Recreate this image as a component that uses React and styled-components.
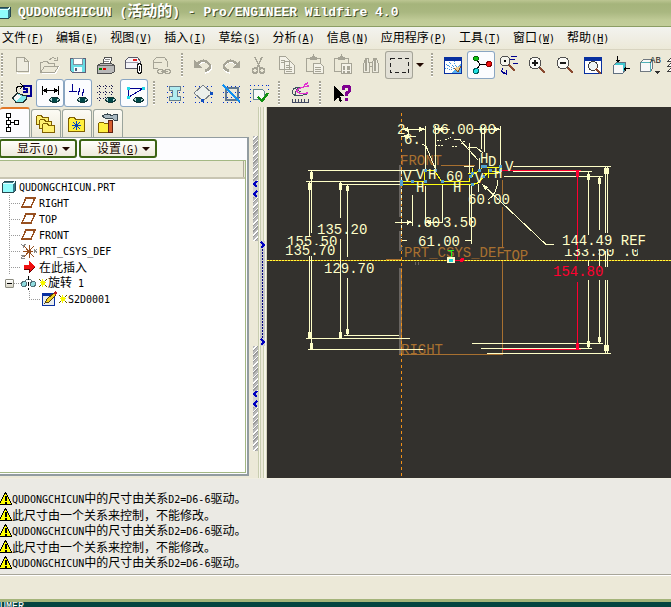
import React from 'react';
import styled, { createGlobalStyle } from 'styled-components';

const MENUS = [
    ['文件', 'F'], ['编辑', 'E'], ['视图', 'V'], ['插入', 'I'], ['草绘', 'S'], ['分析', 'A'],
    ['信息', 'N'], ['应用程序', 'P'], ['工具', 'T'], ['窗口', 'W'], ['帮助', 'H'],
];

const DRIVEN = 'QUDONGCHICUN中的尺寸由关系D2=D6-6驱动。';
const LOCKED = '此尺寸由一个关系来控制，不能修改。';
const MESSAGES = [DRIVEN, LOCKED, DRIVEN, LOCKED, DRIVEN];

const GREY = '#a6a496';
const NAVY = '#000090';

// shared bits of the icons
const EYE = <g><path d="M13 21q5-6 11 0q-5 5-11 0" fill="#b8d8d8" stroke="#103838" /><circle cx="18.5" cy="21" r="2.5" fill="#004848" /></g>;
const DOTS = <path d="M6 7.5h17M6 13.5h17M6 18.5h17M6 23.5h17" stroke="#0030d0" strokeDasharray="1 3" />;
const HANDLE = <path d="M17 17l5 5" stroke="#8a4a30" strokeWidth="2.5" />;

const ICONS = {
    new: <g stroke={GREY}><path d="M9.5 7.5h8l4 4v11h-12z" stroke="#fff" /><path d="M8.5 6.5h8l4 4v10h-12zM16.5 6.5v4h4" fill="#eeece0" /></g>,
    open: <g stroke={GREY}><path d="M5.5 22.5h14l4-7" stroke="#fff" /><path d="M4.5 21.5v-10h2l1-1h4l1 2h6v3M4.5 21.5l4-6h14l-4 6zM13.5 9q3-4 6-1M21.5 5.5v4h-4" /></g>,
    save: <g><path d="M6.5 7.5h15v14h-13l-2-2z" fill="#68dce4" stroke="#606078" /><path d="M9.5 7.5h9v6h-9z" fill="#fff" stroke="#8090a0" /><path d="M10 16h8v5h-8z" fill="#f4fcff" /><path d="M11 17h2v3h-2z" fill="#506078" /></g>,
    print: <g><path d="M10.5 14l2-8h7l-1 8" fill="#fff" stroke="#505050" /><path d="M13 8.5h5M12 10.5h5M12 12.5h5" stroke="#888" /><path d="M5.5 14.5l3-2h11l3 2v6l-3 2h-14z" fill="#b8b8b8" stroke="#505050" /><path d="M6 14.5h16" stroke="#606060" /><path d="M7 17h3v2h-3z" fill="#008000" /><path d="M11 17h3v2h-3z" fill="#e00000" /></g>,
    mail: <g><path d="M5.5 17.5v-8l3-3h9l3 4v7z" fill="#f4f4f8" stroke="#585868" /><path d="M5.5 11.5h12v6" stroke="#9898a8" /><path d="M13 8h4v2h-4z" fill="#e02020" /><path d="M17.5 21v-7q2-3 4 0v7q-2 3-4 0zM19.5 15v5" fill="#fff" stroke="#101010" /></g>,
    link: <g stroke={GREY}><path d="M5.5 17.5v-8l3-3h8l3 4v5M5.5 11.5h8M10 17.5h-5" /><path d="M10.5 18.5h4l1 2-1 2h-4l-1-2zM17.5 18.5h4l1 2-1 2h-4l-1-2zM13 20.5h7" /></g>,
    undo: <g><path d="M9 14q7-7 13 1q1 5-6 7" stroke="#fff" strokeWidth="2" /><path d="M8 13q7-7 13 1q1 4-5 6" stroke={GREY} strokeWidth="2.5" /><path d="M5 9v8h8z" fill={GREY} /></g>,
    redo: <g><path d="M20 14q-7-7-13 1q-1 5 6 7" stroke="#fff" strokeWidth="2" /><path d="M20 13q-7-7-13 1q-1 4 5 6" stroke={GREY} strokeWidth="2.5" /><path d="M23 9v8h-8z" fill={GREY} /></g>,
    cut: <g stroke={GREY} strokeWidth="1.5"><path d="M10 6l5 11M17 6l-5 11" /><circle cx="10" cy="19.5" r="2.5" /><circle cx="17" cy="19.5" r="2.5" /></g>,
    copy: <g stroke={GREY}><path d="M6.5 5.5h6l4 4v9h-10zM11.5 10.5h6l4 4v8h-10z" fill="#f4f2e8" /><path d="M8 9.5h4M8 11.5h3M13 14.5h4M13 16.5h6M13 18.5h6M13 20.5h6" /></g>,
    paste: <g stroke={GREY}><path d="M5.5 7.5h14v13h-14z" /><path d="M9.5 8.5v-2h2l1-2 1 2h2v2z" fill={GREY} /><path d="M12.5 12.5h7l3 3v7h-10z" fill="#f4f2e8" /><path d="M14 16.5h6M14 18.5h6M14 20.5h6" /></g>,
    pasteSpecial: <g stroke={GREY}><path d="M5.5 7.5h14v13h-14z" /><path d="M9.5 8.5v-2h2l1-2 1 2h2v2z" fill={GREY} /><path d="M12.5 12.5h10v10h-10z" fill="#f4f2e8" /><path d="M14 15.5h2M18 15.5h3M14 17.5h2M18 17.5h3M14 20.5h2M18 20.5h3" strokeWidth="2" /></g>,
    find: <g stroke={GREY}><path d="M8.5 7.5h3v3l1 2v9h-6v-8zM16.5 7.5h3l2 6v8h-6v-9zM12.5 11.5h3M12.5 15.5h3" fill="#eeece0" /><path d="M9 8v12M18 8v12" strokeWidth="2" /></g>,
    select: <path d="M5.5 7.5h18v14h-18z" stroke="#202020" strokeDasharray="4 3" />,
    repaint: <g><path d="M5.5 6.5h17v16h-17z" fill="#fff" stroke="#0830a0" /><path d="M5 6h18v4h-18z" fill="#0830a0" /><path d="M12 22l10-9v9z" fill="#58b0f0" /><path d="M7 13l8 5M10 11l7 7M15 10l3 8M6 17l8 2" stroke="#4098e0" strokeDasharray="1 1" /><path d="M15 17l4 4 3-6" stroke="#805028" fill="#f0d090" /></g>,
    spin: <g><path d="M9 8l4 5M13 13l-4 7M13 13.5h9" stroke="#000" /><circle cx="9" cy="7.5" r="2.5" fill="#10c010" stroke="#086008" /><circle cx="22" cy="13" r="2.5" fill="#f01010" stroke="#800" /><circle cx="9" cy="20" r="2.5" fill="#20e0e0" stroke="#006060" /></g>,
    orient: <g><circle cx="10" cy="10" r="5" fill="#f4f4ec" stroke="#505050" /><path d="M9 9h2v2h-2z" fill="#000" /><path d="M14 14l6 6" stroke="#8a4a30" strokeWidth="2" /><path d="M16 5.5h6M15 8.5h5M18 12.5h5M8 17q-3 4 2 6M8 21l3 2v-4" stroke={NAVY} /></g>,
    zoomIn: <g><circle cx="12" cy="12" r="6" fill="#fafaf6" stroke="#505050" /><path d="M9 12h6M12 9v6" stroke="#181818" strokeWidth="2" />{HANDLE}</g>,
    zoomOut: <g><circle cx="12" cy="12" r="6" fill="#fafaf6" stroke="#505050" /><path d="M9 12h6" stroke="#181818" strokeWidth="2" />{HANDLE}</g>,
    refit: <g><path d="M5.5 6.5h17v16h-17z" fill="#fff" stroke="#0830a0" /><path d="M5 6h18v4h-18z" fill="#0830a0" /><circle cx="14" cy="15" r="4.5" fill="#eef4f4" stroke="#404040" /><path d="M17 18l5 5" stroke="#8a4a30" strokeWidth="2" /></g>,
    views: <g><path d="M6.5 14.5l3-3h9v7l-3 4h-9z" fill="#40c8d0" stroke="#607080" /><path d="M7 14h9v8h-9z" fill="#f8f8f8" /><path d="M10.5 5v6M23 17.5h-6" stroke="#000" /><path d="M8 9h5l-2 3zM19 15v5l-3-2z" fill="#000" /></g>,
    annotate: <g><path d="M5.5 11.5l3-3h9v9l-2 3h-10z" fill="#f8f8f8" stroke="#707880" /><path d="M5.5 11.5h10v9M15.5 11.5l2-3" stroke="#50b0b8" /><path d="M19 20h6l-3 3z" fill="#303030" /></g>,
    layers: <g stroke="#404040" fill="#fff"><path d="M5 20l4-4h12l-4 4zM5 15l4-4h12l-4 4zM5 10l4-4h12l-4 4z" /></g>,
    sketchView: <g><path d="M16 6.5h7v10h-8M16 6v4h3v3h-4" stroke={NAVY} strokeWidth="2" /><path d="M8.5 13v-4l2-2h5M12 4l3 3-3 3" stroke="#000" /><path d="M4.5 19l5-5 5 2 4 1v3l-3 3h-8z" fill="#80e8e8" stroke="#203030" /><path d="M5 19l4-4 4 2-4 5z" fill="#f8f8f8" /></g>,
    dims: <g><path d="M6.5 7v9M22.5 7v9M7 11.5h15" stroke="#000" /><path d="M7 11.5l4-3v6zM22 11.5l-4-3v6z" fill="#000" />{EYE}</g>,
    constraints: <g><path d="M8.5 5v8M5 12.5h8M14 16l2-7M18 17l2-7" stroke={NAVY} />{EYE}</g>,
    grid: <g><path d="M7.5 6v17M13.5 6v17M19.5 6v17M5 7.5h18M5 13.5h18M5 19.5h18" stroke="#181850" strokeDasharray="1 2" />{EYE}</g>,
    vertices: <g><path d="M8 9.500h15l-15 9z" stroke={NAVY} /><path d="M7 8h3v3h-3zM22 8h3v3h-3zM7 17h3v3h-3z" fill="#20d8e8" />{EYE}</g>,
    dimStyle: <g>{DOTS}<path d="M8.5 7.5h11v4h-3v6h3v4h-11v-4h3v-6h-3z" fill="#b0ecf0" stroke="#68808c" /></g>,
    rotated: <g>{DOTS}<path d="M14 6l9 8-9 8-9-8z" fill="#ecf0ec" stroke="#788088" /><path d="M21 13h3v3h-3zM12 20h3v3h-3z" fill="#1050c0" /></g>,
    hatch: <g>{DOTS}<path d="M8.5 8.5h12v12h-12z" stroke="#607890" strokeWidth="2" /><path d="M6 6l17 17" stroke="#1090f0" strokeWidth="2" /></g>,
    accept: <g><path d="M5 6.5h18M5.5 6v17M23.5 6v8" stroke="#0030d0" strokeDasharray="1 3" /><path d="M8.5 10.5h9l2 2v8h-11z" fill="#f8f8f8" stroke="#608890" /><path d="M13 18l4 4 6-8" stroke="#109010" strokeWidth="2.5" /></g>,
    measure: <g><path d="M6 23.5h17M6.5 20v3M9.5 20v3M12.5 20v3M15.5 20v3M18.5 20v3M22.5 20v3" stroke="#404860" /><path d="M18 9q-11-2-12 4q1 6 15 2M14 8q-5 3-5 8M10 10l5 3" stroke="#405060" /><path d="M23 7q-10 1-12 5q2 4 11 2M18 6l4-2" stroke="#e030d0" strokeWidth="1.5" /></g>,
    help: <g><path d="M7 7v15l4-4 2 5 2-1-2-5h4z" fill="#000" /><path d="M16 11q0-4 3-4q4 0 4 3t-4 4v3M19.5 19v3" stroke="#800090" strokeWidth="3" /></g>,
};

const ROW_ONE = [
    'new', 'open', 'save', 'print', 'mail', 'link', '|', 'undo', 'redo', 'cut', 'copy', 'paste', 'pasteSpecial',
    'find', 'select', 'v', '|', 'repaint', 'spin', 'orient', 'zoomIn', 'zoomOut', 'refit', 'views', 'annotate', 'layers',
];
const ROW_TWO = [
    'sketchView', 'dims', 'constraints', 'grid', 'vertices', '|', 'dimStyle', 'rotated', 'hatch', 'accept', '|', 'measure', '|', 'help',
];
const CHECKED = ['spin', 'dims', 'constraints', 'vertices'];

// Latin letters are half as wide as the Chinese ones
function Mixed({ children }) {
    return (
        <span>
            {children.split(/([\x20-\x7e]+)/).filter(Boolean).map((part, i) => (
                /^[\x20-\x7e]/.test(part) ? <Latin key={i}>{part}</Latin> : part
            ))}
        </span>
    );
}

function Toolbar({ items, label }) {
    return (
        <ToolRow role="toolbar" aria-label={label}>
            <Grip $first />
            {items.map((name, i) => {
                if (name === '|') return <Grip key={i} />;
                if (name === 'v') return <DropButton key={i} aria-label="select options"><Triangle /></DropButton>;
                return (
                    <ToolButton key={i} aria-label={name} $checked={CHECKED.includes(name)} $pressed={name === 'select'}>
                        <Glyph viewBox="0 0 28 28">
                            {ICONS[name]}
                            {name === 'annotate' && <GlyphText x="15" y="12">AB</GlyphText>}
                        </Glyph>
                    </ToolButton>
                );
            })}
        </ToolRow>
    );
}

const Plane = () => <TreeIcon viewBox="0 0 16 16"><path d="M5 3h9l-4 9h-9z" stroke="#985020" strokeWidth="1.5" /></TreeIcon>;
const Cube = () => <TreeIcon viewBox="0 0 16 16"><path d="M1.5 4.5l2-2h11v9l-2 2h-11z" fill="#387888" stroke="#284850" /><path d="M2 5h10v8h-10z" fill="#90fcfc" /><path d="M2 4.5h10l2-2" stroke="#e0ffff" /></TreeIcon>;
const Csys = () => <TreeIcon viewBox="0 0 16 16"><path d="M8 2v13M2 8h10M3 3l10 11M13 3l-10 11" stroke="#985020" /><path d="M0 1l2 2 3-2M2 3v2M13 6l3 4M16 6l-3 4M0 12h4l-4 3h4" stroke="#888" /></TreeIcon>;
const InsertArrow = () => <TreeIcon viewBox="0 0 16 16"><path d="M3 6h5v-4l6 6-6 6v-4h-5z" fill="#f01010" /><path d="M3 10h5v4l6-6" stroke="#600" /></TreeIcon>;
const Revolve = () => <TreeIcon viewBox="0 0 16 16"><path d="M7.5 1v14" stroke="#000" strokeDasharray="4 2" /><path d="M3 8q2-5 4-3M12 8q-2-5-4-3" stroke="#607880" /><circle cx="3" cy="9" r="2.5" fill="#90dce0" stroke="#507078" /><circle cx="12" cy="9" r="2.5" fill="#90dce0" stroke="#507078" /></TreeIcon>;
const Sketch = () => <TreeIcon viewBox="0 0 16 16"><path d="M1.5 2.5h12v12h-12z" fill="#e8ecec" stroke="#0830a0" /><path d="M1 2h12v3h-12z" fill="#0830a0" /><path d="M4 12l2-4 7-6 2 2-7 7z" fill="#f0d020" stroke="#504010" /><path d="M12 2l2-2 2 2-2 2z" fill="#c02020" /></TreeIcon>;
const Star = () => <StarIcon viewBox="0 0 8 10"><path d="M0 1l8 8M8 1l-8 8" stroke="#605800" /><path d="M2 3h4v4h-4z" fill="#f8f800" /><path d="M3.5 1v8M1 4.5h6" stroke="#f8f800" /></StarIcon>;

function ModelTree() {
    return (
        <Tree>
            <TreeRow $indent={1}><Cube /><Mixed>QUDONGCHICUN.PRT</Mixed></TreeRow>
            {['RIGHT', 'TOP', 'FRONT'].map(name => (
                <TreeRow key={name} $indent={9}><Branch /><Plane /><Mixed>{name}</Mixed></TreeRow>
            ))}
            <TreeRow $indent={9}><Branch /><Csys /><Mixed>PRT_CSYS_DEF</Mixed></TreeRow>
            <TreeRow $indent={9}><Branch /><InsertArrow /><Mixed>在此插入</Mixed></TreeRow>
            <TreeRow $indent={5}>
                <Collapse aria-label="collapse"><Minus /></Collapse>
                <Branch $short /><Revolve /><Star /><Mixed>旋转 1</Mixed>
            </TreeRow>
            <TreeRow $indent={29}><Branch $last /><Sketch /><Star /><Mixed>S2D0001</Mixed></TreeRow>
        </Tree>
    );
}

// [text, x, baseline]
const DIM_TEXTS = [
    ['135.20', 317, 234], ['135.70', 285, 255], ['129.70', 324, 273], ['61.00', 418, 246],
    ['.60', 415, 227], ['3.50', 443, 227], ['60.00', 468, 204], ['60', 446, 181],
    ['86.00', 432, 134], ['00', 479, 134], ['2', 397, 134], ['6.', 404, 144], ['144.49 REF', 562, 245],
    ['V', 403, 181], ['V', 416, 179], ['H', 428, 179], ['H', 416, 192], ['H', 453, 192], ['H', 480, 163],
    ['V', 505, 171], ['D', 488, 166], ['V', 475, 183], ['H', 494, 178],
];
const DATUM_TEXTS = [['FRONT', 400, 165], ['RIGHT', 401, 354], ['PRT_CSYS_DEF', 404, 257], ['TOP', 503, 260]];
const VERTICES = [
    [401, 181], [412, 181], [425, 181], [425, 170], [435, 170], [442, 181], [470, 176], [472, 173], [479, 170],
    [482, 166], [485, 166], [500, 166], [500, 170], [490, 170], [483, 176], [472, 184], [401, 184],
];

function Drawing() {
    return (
        <Canvas viewBox="267 107 404 371" role="img" aria-label="sketch">
            <g stroke="#686460" strokeWidth="2"><path d="M400 165v52M400 231v20M400 268v86" /></g>
            <g stroke="#a87030">
                <path d="M441 165.5h34M502.5 180v15M502.5 207v40M502.5 260v94M399 354h104M386 259.5h16M401.5 268v86" />
            </g>
            <path d="M401.5 113v364" stroke="#f09018" strokeDasharray="3 3" />
            <path d="M401.5 168v70" stroke="#ffffc8" strokeDasharray="3 3" strokeDashoffset="3" />
            {DATUM_TEXTS.map(([text, x, y]) => <DatumText key={text} x={x} y={y}>{text}</DatumText>)}
            <path d="M267 260.5h404" stroke="#c87800" />
            <path d="M267 260.5h404" stroke="#ffff40" strokeDasharray="2 1" />
            <g stroke="#ffffc8">
                <path d="M308 170.5h109M306 181.5h94M341 184.5h59" />
                <path d="M311.5 171v62M309.5 182v55M309.5 256v82M311.5 256v93M340.5 182v36M340.5 239v99M347.5 185v72M347.5 278v57" />
                <path d="M344 335.5h55M306 338.5h104M308 349.5h115" />
                <path d="M513 166.5h98M513 171.5h79M504 176.5h99" />
                <path d="M588.5 172v63M588.5 260v6M588.5 280v68M599.5 177v53M599.5 250v17M599.5 280v63" />
                <path d="M605.5 166v67M607.5 166v67M605.5 251v16M607.5 251v16M605.5 280v73M607.5 280v73" />
                <path d="M472 343.5h131M481 348.5h111M487 353.5h124" />
                <path d="M425.5 126v44M425.5 186v40M435.5 126v44M500.5 126v40M412.5 195v31M442.5 185v37M469.5 143v30M469.5 185v40M471.5 185v59M479.5 158v12M481.5 127v22M484.5 127v25M478.5 184v8" />
                <path d="M401 129.5h24M436 129.5h14M474 129.5h26M401 136.5h15M395 222.5h17M425 222.5h18M402 240.5h5M465 240.5h6M408.5 129v8" />
                <path d="M422 144l4 2 9 22M460 140l18 20M454 139.5h7M468 147l9 1 6 5M482 184l64 60.5h8M498 180q-1 14-10 20M464 166.5h10" />
                <path d="M435 145h8M445 140l6-3M452 146h5M461 144l5-4M437 140h4" strokeDasharray="2 1" />
            </g>
            <g fill="#ffffc8">
                <path d="M310 172h3v7h-3zM308 183h3v7h-3zM339 183h3v7h-3zM346 186h3v5h-3zM308 332h3v6h-3zM310 343h3v6h-3zM339 332h3v6h-3zM346 329h3v5h-3z" />
                <path d="M587 174h3v6h-3zM598 178h3v6h-3zM604 168h5v6h-5zM587 341h3v6h-3zM598 337h3v5h-3zM604 345h5v6h-5z" />
                <path d="M402 129l6-2v5zM425 129l-6-2v5zM436 129l6-2v5zM500 129l-6-2v5zM403 136l5-2v5zM412 222l-5-2v5zM426 222l5-2v5zM482 184l6 3-3 3z" />
            </g>
            <g stroke="#ff0030">
                <path d="M502 170.5h79M577.5 171v89M577.5 282v67M503 349.5h78" />
                <path d="M577.5 171v6M577.5 343v6" strokeWidth="3" />
            </g>
            <g stroke="#ffff10">
                <path d="M401 184.5h71l5-1 6-6 7-6.5h11v-4h-18l-4 4-7 3-3 4v3.500h-27.500l-7-11h-10v11H401M484 173h14M488.5 169v9M472.5 168v9M468 173h9" />
            </g>
            {VERTICES.map(([x, y], i) => <rect key={i} x={x - 1} y={y - 1} width="3" height="3" fill="#50a0d0" />)}
            {DIM_TEXTS.map(([text, x, y]) => <DimText key={`${text}${x}${y}`} x={x} y={y}>{text}</DimText>)}
            <clipPath id="upper"><path d="M284 236h56v9h-56z" /></clipPath>
            <clipPath id="lower"><path d="M562 249h76v8h-76z" /></clipPath>
            <DimText x="287" y="246" clipPath="url(#upper)">155.50</DimText>
            <DimText x="564" y="256" clipPath="url(#lower)">133.50 .0</DimText>
            <DimText x="553" y="276" $active>154.80</DimText>
            <path d="M447 257h8v6h-8z" fill="#ffffd0" />
            <path d="M449 259h4v3h-4z" fill="#20d0d8" />
            <path d="M448 250.5h6M451.5 250v7" stroke="#20f020" />
            <path d="M455 260.5h6" stroke="#ff0030" />
            <circle cx="462" cy="260" r="2" fill="#ff0030" />
            <path d="M399 246l4 5M403 246l-4 5M415 262v3M418 262v3" stroke="#686460" />
        </Canvas>
    );
}

const FOLDER = 'M1.5 3.5l1-1h4l1 2h6v7h-12z';
const TAB_ICONS = [
    <g stroke="#000" fill="#fff"><path d="M4.5 4v12M5 10.5h8" /><path d="M2.5 1.5h4v4h-4zM2.5 8.5h4v4h-4zM2.5 15.5h4v4h-4zM10.5 8.5h4v4h-4z" /></g>,
    <g fill="#fff070" stroke="#806000"><path d={FOLDER} /><path d={FOLDER} transform="translate(3 4)" /><path d={FOLDER} transform="translate(6 8)" /></g>,
    <g><path d="M2.5 6.5l1-2h5l1 2h9v12h-16z" fill="#fff040" stroke="#806000" /><path d="M10.5 8v9M6 12.5h9M7 9l7 7M14 9l-7 7" stroke="#0040c0" /></g>,
    <g><path d="M1.5 10.5l1-1h4l1 1h6v9h-12z" fill="#fff040" stroke="#806000" /><path d="M5 3q6-4 10 0l2-2h3v6h-3l-2-2h-7z" fill="#a8b8c0" stroke="#384850" /><path d="M11 7h4v12h-4z" fill="#d86030" stroke="#602010" /></g>,
];

function App() {
    return (
        <Window>
            <GlobalStyle />
            <TitleBar>
                <Cube />
                <Title>QUDONGCHICUN (<TitleHan>活动的</TitleHan>) - Pro/ENGINEER Wildfire 4.0</Title>
            </TitleBar>
            <MenuBar>
                {MENUS.map(([name, key]) => (
                    <MenuItem key={key}>{name}<Latin>(<u>{key}</u>)</Latin></MenuItem>
                ))}
            </MenuBar>
            <Toolbars>
                <Toolbar items={ROW_ONE} label="file and view" />
                <Toolbar items={ROW_TWO} label="sketcher" />
            </Toolbars>
            <Workspace>
                <Navigator>
                    <Tabs>
                        {TAB_ICONS.map((icon, i) => (
                            <Tab key={i} $active={i === 0} aria-label={`tab ${i + 1}`}>
                                <TabIcon viewBox="0 0 22 22">{icon}</TabIcon>
                            </Tab>
                        ))}
                    </Tabs>
                    <Pane>
                        <PaneButtons>
                            <PaneButton><span>显示<Latin>(<u>O</u>)</Latin></span><Triangle /></PaneButton>
                            <PaneButton><span>设置<Latin>(<u>G</u>)</Latin></span><Triangle /></PaneButton>
                        </PaneButtons>
                        <TreeBox>
                            <TreeHeader />
                            <ModelTree />
                        </TreeBox>
                    </Pane>
                </Navigator>
                <Splitter>
                    <SashGrip><Chevrons viewBox="0 0 5 16"><path d="M4 0L1 3l3 3M4 10L1 13l3 3" /></Chevrons></SashGrip>
                    <SashTrack>
                        <Chevrons viewBox="0 0 5 8"><path d="M1 1l3 3-3 3" /></Chevrons>
                        <BlueDots />
                        <Chevrons viewBox="0 0 5 8"><path d="M1 1l3 3-3 3" /></Chevrons>
                    </SashTrack>
                    <SashGrip><Chevrons viewBox="0 0 5 16"><path d="M4 0L1 3l3 3M4 10L1 13l3 3" /></Chevrons></SashGrip>
                </Splitter>
                <Viewport><Drawing /></Viewport>
            </Workspace>
            <Messages>
                {MESSAGES.map((text, i) => (
                    <Message key={i}>
                        <WarnIcon viewBox="0 0 12 14">
                            <path d="M5.5 .5l6.500 12h-13z" fill="#ff0" stroke="#000" />
                            <path d="M5.5 4v5M5.5 10v2" stroke="#000" strokeWidth="2" />
                        </WarnIcon>
                        <Mixed>{text}</Mixed>
                    </Message>
                ))}
            </Messages>
            <StatusBar />
            <Desktop>UMER</Desktop>
        </Window>
    );
}

export default App;

const GlobalStyle = createGlobalStyle`
    * {
        box-sizing: border-box;
    }
    body {
        margin: 0;
        background: #ece9d8;
        font-family: 'Noto Sans CJK SC', sans-serif;
        font-size: 12px;
        line-height: 16px;
        color: #000;
    }
    button {
        font: inherit;
        color: inherit;
        padding: 0;
        border: 0;
        background: none;
    }
    svg {
        display: block;
        flex: none;
        fill: none;
        shape-rendering: crispEdges;
    }
`;

const Window = styled.div`
    display: flex;
    flex-direction: column;
    min-height: 100vh;
    overflow: hidden;
`;

const Latin = styled.span`
    font-family: 'DejaVu Sans Mono', monospace;
    font-size: 10px;
    white-space: pre;
`;

const TitleBar = styled.header`
    display: flex;
    align-items: center;
    height: 27px;
    border-bottom: 1px solid #8b9d64;
    background: linear-gradient(#bcc692 0, #a5b47b 4px, #a9b780 12px, #bfca96 20px, #c3cd9a 100%);

    svg {
        width: 16px;
        margin-left: -4px;
    }
`;

const Title = styled.h1`
    margin: 0 0 0 4px;
    font: bold 13px/26px 'Liberation Mono', monospace;
    color: #fff;
    text-shadow: 1px 1px #46502c;
    white-space: nowrap;
`;

const TitleHan = styled.span`
    font: bold 15px/20px 'Noto Sans CJK SC', sans-serif;
`;

const MenuBar = styled.nav`
    display: flex;
    gap: 12px;
    height: 23px;
    padding-left: 2px;
    background: linear-gradient(#f3f3ef, #ece9d8);
    border-bottom: 1px solid #d8d4c0;
`;

const MenuItem = styled.button`
    flex: none;
    line-height: 20px;
    white-space: nowrap;
`;

const Toolbars = styled.div`
    display: flex;
    flex-direction: column;
    padding-top: 1px;
    background: #ece9d8;
`;

const ToolRow = styled.div`
    display: flex;
    height: 28px;
    overflow: hidden;
`;

const Grip = styled.div`
    flex: none;
    width: ${props => (props.$first ? 8 : 13)}px;
    padding: 2px 0 2px ${props => (props.$first ? 1 : 5)}px;

    &::before {
        content: '';
        display: block;
        width: 2px;
        height: 24px;
        background: repeating-linear-gradient(#a8a698 0 2px, #fff 2px 3px);
    }
`;

const ToolButton = styled.button`
    flex: none;
    width: 28px;
    height: 28px;
    border-radius: 3px;
    background: ${props => (props.$checked ? '#fbfcfe' : props.$pressed ? '#e2e0d6' : 'none')};
    box-shadow: ${props => (props.$checked ? 'inset 0 0 0 1px #8aa6c2' : props.$pressed ? 'inset 0 0 0 1px #a5a498' : 'none')};
`;

const DropButton = styled.button`
    display: flex;
    align-items: center;
    justify-content: center;
    flex: none;
    width: 13px;
`;

const Glyph = styled.svg`
    width: 28px;
    height: 28px;
`;

const GlyphText = styled.text`
    font: 9px 'Liberation Mono', monospace;
    fill: #202020;
`;

const Triangle = styled.i`
    border: solid transparent;
    border-width: 4px 4px 0;
    border-top-color: #200800;
`;

const Workspace = styled.main`
    display: flex;
    flex: 1;
    min-height: 371px;
`;

const Navigator = styled.aside`
    display: flex;
    flex-direction: column;
    flex: none;
    width: 249px;
`;

const Tabs = styled.div`
    display: flex;
    align-items: flex-end;
    gap: 1px;
    height: 30px;
`;

const Tab = styled.button`
    display: flex;
    align-items: center;
    justify-content: center;
    width: 30px;
    height: ${props => (props.$active ? 30 : 28)}px;
    border: 1px solid #9aa49c;
    border-width: ${props => (props.$active ? '2px 1px 0 0' : '1px 1px 0')};
    border-top-color: ${props => (props.$active ? '#e07828' : '#9aa49c')};
    border-radius: 3px 3px 0 0;
    background: ${props => (props.$active ? '#fcfcfe' : 'linear-gradient(#fcfbf4, #ece9d8)')};
`;

const TabIcon = styled.svg`
    width: 22px;
    height: 22px;
`;

const Pane = styled.section`
    display: flex;
    flex: 1;
    flex-direction: column;
    margin-bottom: 2px;
    padding: 1px 1px 1px 0;
    border: solid #929ca0;
    border-width: 1px 2px 2px 0;
    background: #fcfcfe;
`;

const PaneButtons = styled.div`
    display: flex;
    gap: 2px;
    height: 21px;
    margin-left: -1px;
`;

const PaneButton = styled.button`
    display: flex;
    align-items: center;
    justify-content: space-between;
    width: 78px;
    height: 19px;
    padding: 0 5px 0 16px;
    border: 2px solid #3c6414;
    border-radius: 3px;
    background: linear-gradient(#fefefa, #eeebdc);
    color: #200800;
    line-height: 14px;
`;

const TreeBox = styled.div`
    display: flex;
    flex: 1;
    flex-direction: column;
    border: solid #a4b884;
    border-width: 1px 1px 1px 0;
    background: #fff;
`;

const TreeHeader = styled.div`
    height: 18px;
    border-bottom: 2px solid #c8c5b2;
    background: linear-gradient(to left, transparent 1px, #aca899 1px 2px, transparent 2px) #ece9d8;
`;

const Tree = styled.div``;

const TreeRow = styled.div`
    display: flex;
    align-items: center;
    height: 16px;
    padding-left: ${props => props.$indent}px;
    white-space: nowrap;
`;

const TreeIcon = styled.svg`
    width: 16px;
    height: 16px;
    margin-right: 2px;
`;

const StarIcon = styled.svg`
    width: 8px;
    height: 10px;
    margin-right: 1px;
`;

const Branch = styled.span`
    flex: none;
    width: ${props => (props.$short ? 7 : 12)}px;
    height: 16px;
    background:
        repeating-linear-gradient(to right, #999 0 1px, transparent 1px 2px) 0 8px / 100% 1px no-repeat,
        repeating-linear-gradient(#999 0 1px, transparent 1px 2px) 0 0 / ${props => (props.$short ? '0 0' : props.$last ? '1px 8px' : '1px 16px')} no-repeat;
`;

const Collapse = styled.button`
    display: flex;
    align-items: center;
    flex: none;
    width: 9px;
    height: 9px;
    padding: 0 1px;
    border: 1px solid #8c8c80;
    border-radius: 1px;
    background: linear-gradient(#fff, #d8d4c4);
`;

const Minus = styled.i`
    width: 5px;
    height: 1px;
    background: #000;
`;

const Splitter = styled.div`
    display: flex;
    flex: none;
    flex-direction: column;
    width: 18px;
    padding: 29px 2px 27px 4px;
    background: linear-gradient(to right, #ece9d8 9px, #c8cdb0 9px 10px, #f6f4e8 10px 11px, #c8cdb0 11px 12px, #ece9d8 12px 14px, #c8cdb0 14px 15px, #f6f4e8 15px 17px, #d5d3bc 17px);
`;

const SashGrip = styled.div`
    display: flex;
    align-items: center;
    flex: 1;
    width: 5px;
    background: repeating-linear-gradient(135deg, #b8b8b8 0 2px, #fff 2px 3px, #989898 3px 4px);
`;

const SashTrack = styled.div`
    display: flex;
    flex: 1;
    flex-direction: column;
    align-items: center;
    align-self: flex-end;
    width: 5px;
    background: #c4c4c4;
`;

const BlueDots = styled.i`
    flex: 1;
    width: 1px;
    background: repeating-linear-gradient(#000080 0 2px, #d8d8d8 2px 3px);
`;

const Chevrons = styled.svg`
    width: 5px;
    background: #d0d0d0;
    stroke: #0000c0;
    stroke-width: 2px;
`;

const Viewport = styled.div`
    flex: 1;
    min-width: 0;
    overflow: hidden;
    background: #33312d;
`;

const Canvas = styled.svg`
    width: 404px;
    height: 371px;
`;

const DimText = styled.text`
    font: 14px 'Liberation Mono', monospace;
    fill: ${props => (props.$active ? '#ff0030' : '#ffffc8')};
`;

const DatumText = styled(DimText)`
    fill: #a87030;
`;

const Messages = styled.section`
    padding: 12px 0 3px;
    border-top: 1px solid #f0ede0;
    border-bottom: 1px solid #a8a69a;
    background: #ebeae4;
`;

const Message = styled.div`
    display: flex;
    align-items: center;
    height: 16px;
    white-space: nowrap;
`;

const WarnIcon = styled.svg`
    width: 12px;
    height: 14px;
`;

const StatusBar = styled.footer`
    height: 27px;
    border-top: 1px solid #fff;
    border-bottom: 3px solid #a4b47a;
    background: #ece9d8;
`;

const Desktop = styled.div`
    height: 5px;
    overflow: hidden;
    background: #044440;
    color: #fff;
    font: 10px/10px 'Liberation Mono', monospace;
`;
